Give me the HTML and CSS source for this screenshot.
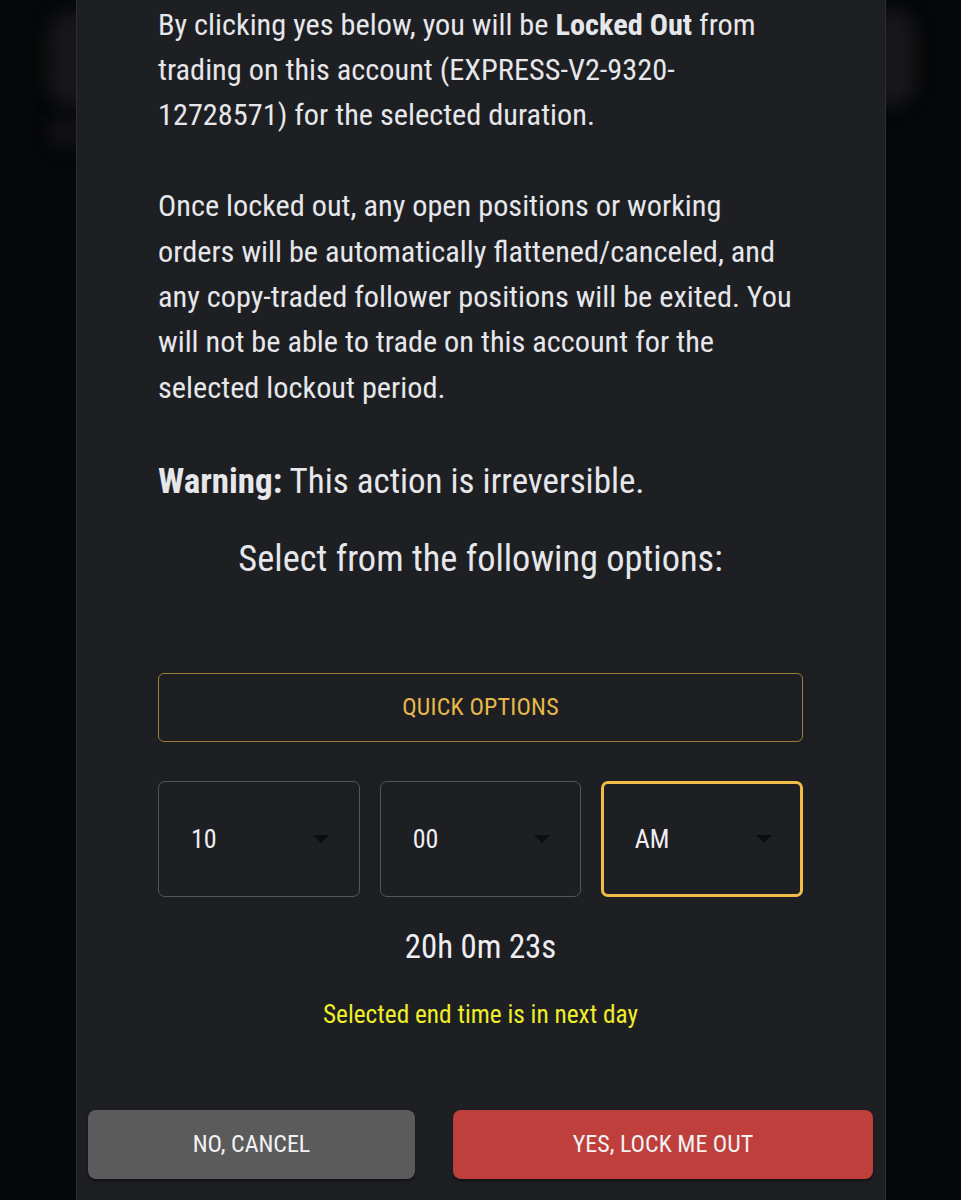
FILE: index.html
```html
<!DOCTYPE html>
<html lang="en">
<head>
<meta charset="utf-8">
<title>Lock Out</title>
<link rel="stylesheet" href="styles.css">
</head>
<body>
<div class="backdrop">
  <div class="ghost ghost-left"></div>
  <div class="ghost ghost-left-label"></div>
  <div class="ghost ghost-right"></div>
</div>
<div class="overlay">
  <div class="modal">
    <div class="modal-body">
      <p class="para">By clicking yes below, you will be <strong>Locked Out</strong> from trading on this account (EXPRESS-V2-9320-12728571) for the selected duration.</p>
      <p class="para">Once locked out, any open positions or working orders will be automatically flattened/canceled, and any copy-traded follower positions will be exited. You will not be able to trade on this account for the selected lockout period.</p>
      <p class="warning"><strong>Warning:</strong> This action is irreversible.</p>
      <h2 class="select-title">Select from the following options:</h2>
      <button class="quick">QUICK OPTIONS</button>
      <div class="selects">
        <div class="select"><span>10</span><i class="caret"></i></div>
        <div class="select"><span>00</span><i class="caret"></i></div>
        <div class="select active"><span>AM</span><i class="caret"></i></div>
      </div>
      <div class="countdown">20h 0m 23s</div>
      <div class="note">Selected end time is in next day</div>
    </div>
    <div class="modal-footer">
      <button class="btn btn-cancel">NO, CANCEL</button>
      <button class="btn btn-confirm">YES, LOCK ME OUT</button>
    </div>
  </div>
</div>
</body>
</html>
```
FILE: styles.css
```css
html, body {
  margin: 0;
  padding: 0;
  height: 100%;
  overflow: hidden;
  background: #060708;
  font-family: "Roboto Condensed", Roboto, sans-serif;
}

.backdrop {
  position: absolute;
  inset: 0;
  overflow: hidden;
}
.ghost {
  position: absolute;
  background: #17171a;
  border-radius: 24px;
  filter: blur(8px);
}
.ghost-left { left: 48px; top: 12px; width: 80px; height: 95px; }
.ghost-left-label { left: 50px; top: 118px; width: 40px; height: 28px; background: #121214; border-radius: 8px; }
.ghost-right { left: 840px; top: 10px; width: 76px; height: 96px; }

.overlay {
  position: relative;
  display: flex;
  justify-content: center;
  padding-left: 1px;
}

.modal {
  width: 808px;
  background: #1e1f23;
  border-left: 1px solid #2c2d32;
  border-right: 1px solid #2c2d32;
  display: flex;
  flex-direction: column;
  color: #e6e7eb;
  min-height: 1240px;
}

.modal-body {
  padding: 1.5px 82px 0 81px;
  display: flex;
  flex-direction: column;
}

.para {
  margin: 0 0 46px;
  padding-right: 8px;
  font-size: 30.3px;
  line-height: 45.3px;
  font-weight: 400;
}
.para strong { font-weight: 700; }

.warning {
  margin: 0;
  font-size: 35px;
  line-height: 52px;
}
.warning strong { font-weight: 700; }

.select-title {
  margin: 25px 0 0;
  font-size: 36.4px;
  line-height: 52px;
  font-weight: 400;
  text-align: center;
}

.quick {
  margin-top: 88px;
  height: 69px;
  background: transparent;
  border: 1.5px solid #9b7e3e;
  border-radius: 6px;
  color: #e8b74a;
  font-family: inherit;
  font-size: 24px;
  letter-spacing: 0.2px;
}

.selects {
  margin-top: 39px;
  display: grid;
  grid-template-columns: repeat(3, 1fr);
  gap: 20px;
}
.select {
  height: 116px;
  box-sizing: border-box;
  border: 1.5px solid #55565b;
  border-radius: 7px;
  display: flex;
  align-items: center;
  justify-content: space-between;
  padding: 0 30px 0 32px;
  font-size: 26px;
  color: #eeeef2;
}
.select.active {
  border: 3px solid #f1bd48;
  padding-left: 30.5px;
  padding-right: 28.5px;
}
.caret {
  width: 0;
  height: 0;
  border-left: 8px solid transparent;
  border-right: 8px solid transparent;
  border-top: 8px solid #0c0d10;
}

.countdown {
  margin-top: 27px;
  text-align: center;
  font-size: 32.8px;
  line-height: 46px;
  color: #eeeef2;
}

.note {
  margin-top: 27px;
  text-align: center;
  font-size: 25.3px;
  line-height: 36px;
  color: #eeee2a;
}

.modal-footer {
  margin-top: 77px;
  padding: 0 12px 0 11px;
  display: flex;
  gap: 38px;
}
.btn {
  height: 69px;
  border: none;
  border-radius: 8px;
  font-family: inherit;
  font-size: 24px;
  color: #f2f2f4;
  box-shadow: 0 2px 3px rgba(0, 0, 0, 0.45);
}
.btn-cancel {
  width: 327px;
  background: #5b5b5c;
}
.btn-confirm {
  flex: 1;
  background: #be3f3b;
}
```
